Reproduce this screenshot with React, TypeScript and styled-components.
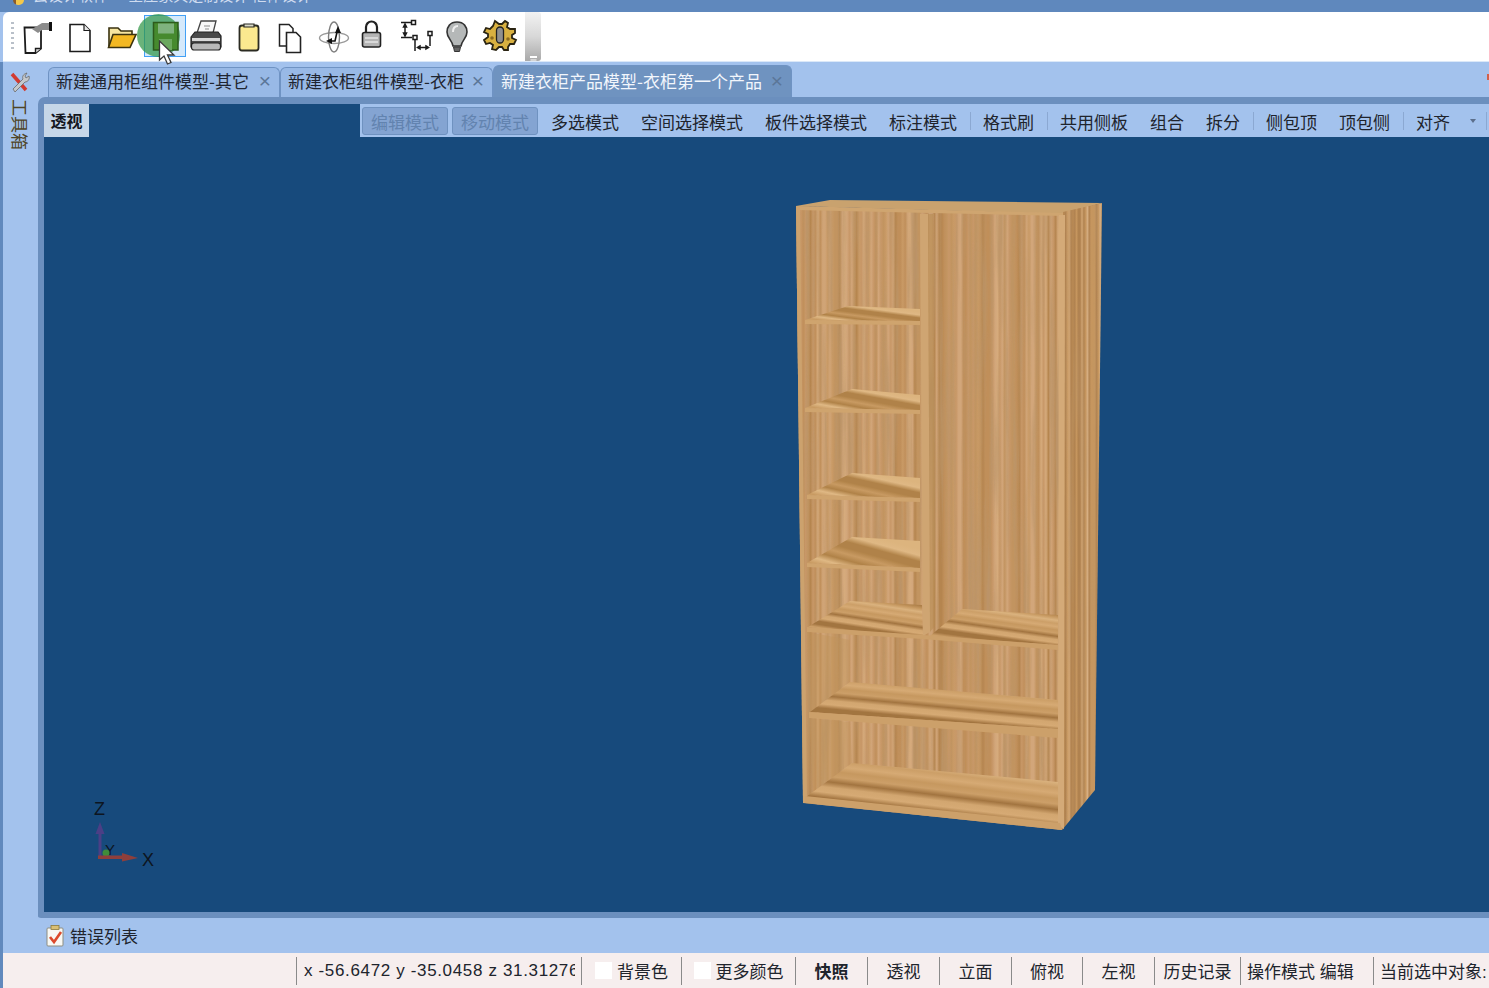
import React from 'react';
import styled, { createGlobalStyle } from 'styled-components';

const GlobalStyle = createGlobalStyle`
  html, body { margin: 0; padding: 0; background: #a3c2ed; overflow: hidden; }
  body { font-family: 'Noto Sans CJK SC', 'Liberation Sans', sans-serif; }
`;

const Frame = styled.div`
  display: flex;
  flex-direction: column;
  width: 1489px;
  height: 988px;
  overflow: hidden;
  background: #a3c2ed;
  color: #20242c;
  font-size: 17px;
`;

const TitleBar = styled.div`
  display: flex;
  flex: 0 0 12px;
  height: 12px;
  overflow: hidden;
  background: #5f88bd;
  padding-left: 13px;
`;

const AppLogo = styled.span`
  width: 11px;
  height: 5px;
  border-radius: 0 0 6px 6px;
  background: linear-gradient(90deg, #8a5a2a 0 30%, #f4c84a 30%);
`;

const TitleText = styled.span`
  margin: -15px 0 0 9px;
  line-height: 20px;
  font-size: 15px;
  white-space: pre;
  color: #cfdcf0;
`;

const Toolbar = styled.div`
  position: relative;
  display: flex;
  align-items: center;
  flex: 0 0 49px;
  margin-left: 3px;
  background: #fff;
  border-radius: 6px 0 0 0;
  border-bottom: 1px solid #dbe8f8;
`;

const Gripper = styled.div`
  width: 3px;
  height: 30px;
  margin: 0 3px 0 8px;
  background: repeating-linear-gradient(180deg, #b9c0c9 0 2px, transparent 2px 5px);
`;

const ToolButton = styled.div`
  display: flex;
  flex: 0 0 42px;
  height: 48px;
  svg { display: block; }
`;

const Overflow = styled.div`
  position: relative;
  flex: 0 0 16px;
  height: 49px;
  margin-left: 4px;
  border-radius: 0 3px 3px 0;
  background: linear-gradient(180deg, #f2f2f2, #d8d8d8 50%, #a9a9a9);
  &::after {
    content: '';
    position: absolute;
    left: 5px;
    bottom: 3px;
    width: 7px;
    height: 2px;
    background: #fff;
    box-shadow: 0 3px 0 -0.5px #fff;
  }
`;

const SaveHighlight = styled.div`
  position: absolute;
  left: 141px;
  top: 3px;
  width: 40px;
  height: 40px;
  border: 1px solid #42a0f5;
  background: #d5e9fb;
`;

const ClickHalo = styled.div`
  position: absolute;
  left: 134px;
  top: 2px;
  width: 43px;
  height: 43px;
  border-radius: 50%;
  background: rgba(48, 150, 70, 0.72);
`;

const SaveIcon = styled.div`
  position: absolute;
  left: 140px;
  top: 0;
`;

const Cursor = styled.svg`
  position: absolute;
  left: 155px;
  top: 28px;
`;

const Workspace = styled.div`
  display: flex;
  flex-direction: column;
  flex: 1;
  min-height: 0;
  border-left: 3px solid #6189bd;
`;

const TabStrip = styled.div`
  display: flex;
  align-items: flex-end;
  flex: 0 0 35px;
  padding-left: 45px;
  position: relative;
`;

const Tab = styled.div<{ $active?: boolean; $width: number }>`
  display: flex;
  align-items: center;
  justify-content: space-between;
  box-sizing: border-box;
  width: ${(p) => p.$width}px;
  height: ${(p) => (p.$active ? 32 : 30)}px;
  padding: 0 8px ${(p) => (p.$active ? 2 : 4)}px 7px;
  border: 1px solid #6f93c3;
  border-bottom: 0;
  border-radius: 6px 6px 0 0;
  background: ${(p) => (p.$active ? '#6f93c0' : '#98b9e6')};
  color: ${(p) => (p.$active ? '#f2f6fc' : '#1f2530')};
  white-space: nowrap;
`;

const TabClose = styled.span`
  font-family: 'Liberation Sans', sans-serif;
  font-size: 21px;
  line-height: 1;
  color: #5b7698;
`;

const EdgeMark = styled.span`
  position: absolute;
  right: 0;
  top: 12px;
  width: 2px;
  height: 6px;
  background: #d0604c;
`;

const Body = styled.div`
  display: flex;
  flex: 1;
  min-height: 0;
`;

const SidePanel = styled.div`
  display: flex;
  flex-direction: column;
  align-items: center;
  box-sizing: border-box;
  flex: 0 0 35px;
  margin-top: -27px;
  padding-right: 2px;
`;

const SideLabel = styled.span`
  margin-top: 5px;
  writing-mode: vertical-rl;
  text-orientation: sideways;
  line-height: 18px;
  color: #4f4526;
`;

const Main = styled.div`
  flex: 1;
  min-width: 0;
  display: flex;
  border: solid #6b8fbe;
  border-width: 7px 0 6px 6px;
  border-radius: 7px 0 0 3px;
`;

const Viewport = styled.div`
  position: relative;
  flex: 1;
  min-width: 0;
  background: #174a7c;
`;

const ViewTop = styled.div`
  position: relative;
  display: flex;
  justify-content: space-between;
  height: 33px;
`;

const ViewLabel = styled.div`
  display: flex;
  align-items: center;
  justify-content: center;
  width: 45px;
  background: #c6d7e8;
  font-weight: 700;
  font-size: 16px;
  padding-bottom: 2px;
  box-sizing: border-box;
  color: #14181f;
`;

const ModeBar = styled.div`
  display: flex;
  align-items: center;
  width: 1129px;
  padding-left: 2px;
  box-sizing: border-box;
  background: #a3c2ed;
  white-space: nowrap;
`;

const ModeButton = styled.div<{ $last?: boolean }>`
  display: flex;
  align-items: center;
  box-sizing: border-box;
  height: 28px;
  padding: 2px 8px 0;
  margin-right: ${(p) => (p.$last ? 2 : 4)}px;
  border: 1px solid #6f92c0;
  border-radius: 3px;
  background: #84a4d2;
  color: #6283af;
`;

const ModeItem = styled.div`
  padding: 2px 11px 0;
`;

const ModeSep = styled.i`
  width: 1px;
  height: 18px;
  margin: 0 1.5px;
  background: #8ba8d2;
`;

const Caret = styled.i`
  width: 0;
  height: 0;
  margin: 0 8px 0 9px;
  border: 3.5px solid transparent;
  border-top: 4px solid #5b6f8c;
  border-bottom: 0;
`;

const SceneSvg = styled.svg`
  position: absolute;
  left: 0;
  top: 0;
`;

const ErrorRow = styled.div`
  display: flex;
  align-items: center;
  gap: 5px;
  flex: 0 0 35px;
  padding-left: 42px;
`;

const StatusBar = styled.div`
  display: flex;
  align-items: center;
  flex: 0 0 35px;
  background: #f6eeee;
  white-space: nowrap;
`;

const StatusLead = styled.div`
  flex: 0 0 293px;
`;

const StatusCell = styled.div<{ $w: number; $bold?: boolean; $start?: boolean }>`
  display: flex;
  align-items: center;
  justify-content: ${(p) => (p.$start ? 'flex-start' : 'center')};
  gap: 5px;
  box-sizing: border-box;
  flex: 0 0 ${(p) => p.$w}px;
  height: 28px;
  padding-left: ${(p) => (p.$start ? 6 : 0)}px;
  border-left: 1px solid #8a8a8a;
  overflow: hidden;
  font-weight: ${(p) => (p.$bold ? 700 : 400)};
  font-family: 'Liberation Sans', 'Noto Sans CJK SC', sans-serif;
`;

const CoordText = styled.span`
  display: block;
  width: 271px;
  margin-left: 1px;
  overflow: hidden;
  letter-spacing: 0.65px;
`;

const Swatch = styled.i`
  flex: 0 0 17px;
  height: 17px;
  background: #fff;
`;

// wood grain stripes, seeded so that the picture is the same on every load
const stripes = (seed: number, count: number, colors: string[]) => {
  let s = seed;
  const next = () => {
    s = (s * 16807) % 2147483647;
    return (s % 1000) / 1000;
  };
  return Array.from({ length: count + 1 }, (_, i) => ({
    offset: `${(i / count) * 100}%`,
    color: colors[Math.floor(next() * colors.length)],
  }));
};

const VERT = ['#c99a66', '#d0a476', '#c08f5a', '#d6ab7c', '#c89868', '#b5854f', '#d2a67a', '#c29460'];
const SIDE = ['#c99a64', '#d2a674', '#b98a54', '#d8b084', '#c6965e', '#b08250'];
const FLAT = ['#d6aa74', '#c69860', '#ad7f48', '#dab27e', '#cc9f68', '#a27440', '#d2a670'];
const SLANT = ['#dcb47e', '#d6ac76', '#dfb884', '#c89a62', '#b08248', '#d4aa74'];

const Stops = ({ list }: { list: { offset: string; color: string }[] }) => (
  <>
    {list.map((stop) => (
      <stop key={stop.offset} offset={stop.offset} stopColor={stop.color} />
    ))}
  </>
);

const shelves = [
  { top: '805,320 848,306 920,309 920,321', front: '805,320 920,321 920,325 805,324' },
  { top: '805,408 852,389 920,395 920,410', front: '805,408 920,410 920,414 805,412' },
  { top: '807,495 852,473 920,478 920,498', front: '807,495 920,498 920,502 807,499' },
  { top: '807,563 852,537 920,541 920,568', front: '807,563 920,568 920,572 807,567' },
];

const floors = [
  { top: '808,627 850,601 922,605 923,636', front: '807,627 923,635 923,639 807,632' },
  { top: '930,636 962,609 1058,615 1058,645', front: '923,635 1058,645 1058,650 923,639' },
  { top: '810,712 850,682 1058,700 1058,729', front: '809,712 1058,729 1058,738 809,718' },
  { top: '806,797 852,763 1058,782 1058,824', front: '805,796 1060,823 1062,830 805,803' },
];

const Cabinet = () => (
  <g transform="translate(-44 -104)">
    <defs>
      <linearGradient id="woodBack" x1="0" x2="1" y1="0" y2="0">
        <Stops list={stripes(41, 110, VERT)} />
      </linearGradient>
      <linearGradient id="woodSide" x1="0" x2="1" y1="0" y2="0">
        <Stops list={stripes(977, 22, SIDE)} />
      </linearGradient>
      <linearGradient id="woodFlat" x1="0.7" x2="0.2" y1="-0.1" y2="0.9">
        <Stops list={stripes(313, 14, FLAT)} />
      </linearGradient>
      <linearGradient id="woodSlant" x1="0" x2="1" y1="1" y2="0">
        <Stops list={stripes(57, 10, SLANT)} />
      </linearGradient>
      <filter id="grain" x="0" y="0" width="100%" height="100%">
        <feTurbulence type="fractalNoise" baseFrequency="0.16 0.006" numOctaves="4" seed="6" />
        <feColorMatrix values="0 0 0 0 0.50  0 0 0 0 0.30  0 0 0 0 0.14  2.4 0 0 0 -1" />
        <feComposite in2="SourceAlpha" operator="in" />
      </filter>
      <filter id="soft" x="-2%" y="-2%" width="104%" height="104%">
        <feGaussianBlur stdDeviation="0.7" />
      </filter>
    </defs>

    <g filter="url(#soft)">
      <polygon points="796,206 830,200 1102,203 1063,214" fill="#c9a26e" />
      <polygon points="1063,212 1102,203 1095,790 1062,830" fill="url(#woodSide)" />
      <polygon points="1063,212 1102,203 1095,790 1062,830" filter="url(#grain)" opacity="0.5" />
      <polygon points="796,206 1063,214 1062,830 803,803" fill="url(#woodBack)" />
      <polygon points="796,206 1063,214 1062,830 803,803" filter="url(#grain)" opacity="0.9" />
      <polygon points="796,206 1063,213 1063,216 797,210" fill="#cfa570" />

      {/* uprights */}
      <polygon points="920,214 928,214 930,632 923,636" fill="#cfa572" />
      <polygon points="928,214 933,214 935,626 930,632" fill="#b78a50" opacity="0.55" />
      <polygon points="1059,215 1065,215 1064,829 1058,826" fill="#d4aa78" />
      <polygon points="796,206 800,207 807,803 803,803" fill="#cca26e" />

      {/* lower compartment side walls */}
      <polygon points="809,718 850,722 852,763 813,792" fill="#c0935a" opacity="0.4" />
      <polygon points="807,632 850,640 850,682 810,712" fill="#c0935a" opacity="0.4" />

      {shelves.map((shelf) => (
        <g key={shelf.top}>
          <polygon points={shelf.top} fill="url(#woodSlant)" />
          <polygon points={shelf.front} fill="#cfa46e" />
        </g>
      ))}
      {floors.map((floor) => (
        <g key={floor.top}>
          <polygon points={floor.top} fill="url(#woodFlat)" />
          <polygon points={floor.front} fill="#cca06a" />
        </g>
      ))}
    </g>
  </g>
);

const AxisGizmo = () => (
  <g transform="translate(-44 -104)" fontFamily="'Liberation Sans', sans-serif" fontSize="18" fill="#0d1520">
    <text x="94" y="815">Z</text>
    <text x="142" y="866">X</text>
    <path d="M100 822 L104.5 834 H101.5 V856 H98.5 V834 H95.5 Z" fill="#4b3f86" />
    <text x="105" y="855" fontSize="15">Y</text>
    <circle cx="106" cy="853" r="3.5" fill="#3f8c3a" />
    <path d="M98 855.5 H122 V853 L138 858 L122 861.5 V859 H98 Z" fill="#8e3f3c" />
  </g>
);

// toolbar icons share one box: 42 wide, 48 high, centre at 21,24
const icons: React.ReactNode[] = [
  <g key="model">
    <path d="M7.5 14.5 H24 V35.5 L18.5 40 H8.5 Z" fill="#fff" stroke="#1c1c1c" strokeWidth="1.8" />
    <path d="M18.5 40 V35.5 H24" fill="#ddd" stroke="#1c1c1c" strokeWidth="1.4" />
    <path d="M15 16 L25 10 L32 10 V17 L25 17 L21 20 Z" fill="#8c8c8c" />
    <rect x="32" y="9" width="3" height="9" fill="#111" />
  </g>,
  <g key="new">
    <path d="M11 11.5 H25 L31 17.5 V38.5 H11 Z" fill="#fff" stroke="#1c1c1c" strokeWidth="1.6" />
    <path d="M25 11.5 V17.5 H31" fill="#e6e6e6" stroke="#1c1c1c" strokeWidth="1.2" />
  </g>,
  <g key="open">
    <path d="M8 33 V15 H17 L20 18 H31 V22" fill="#f6e5a0" stroke="#3a3210" strokeWidth="1.6" />
    <path d="M7.5 34.5 L12 21.5 H35 L29 34.5 Z" fill="#f3b822" stroke="#3a3210" strokeWidth="1.6" />
  </g>,
  <g key="print">
    <path d="M12 20 L16 8 H31 L28 20 Z" fill="#f8f8f8" stroke="#444" strokeWidth="1.3" />
    <path d="M19 13 L25 13 M20 16 H24" stroke="#8b8b8b" strokeWidth="1.2" />
    <path d="M6 24 L10 19 H33 L36 23 V34 H6 Z" fill="#4a4a4a" stroke="#222" strokeWidth="1.2" />
    <rect x="7" y="25" width="28" height="3" fill="#d8d8d8" />
    <rect x="6.5" y="30" width="29" height="7" rx="2.5" fill="#b8b8b8" stroke="#222" strokeWidth="1.2" />
  </g>,
  <g key="clip" transform="translate(1 0)">
    <rect x="11.5" y="12.5" width="19" height="25" rx="2.5" fill="#fbe98f" stroke="#2b2b22" strokeWidth="1.8" />
    <path d="M16 14 V11 H26 V14 Z" fill="#d9d9c8" stroke="#2b2b22" strokeWidth="1.2" />
  </g>,
  <g key="copy">
    <path d="M10.5 11.5 H20 L24 15.5 V33 H10.5 Z" fill="#fff" stroke="#222" strokeWidth="1.5" />
    <path d="M17.5 19.5 H27 L31.5 24 V39.5 H17.5 Z" fill="#fff" stroke="#222" strokeWidth="1.6" />
  </g>,
  <g key="orbit" fill="none" transform="translate(2 0)">
    <ellipse cx="21" cy="25" rx="14.5" ry="5.5" stroke="#9a9a9a" strokeWidth="1.4" />
    <ellipse cx="21" cy="24" rx="5.5" ry="15" stroke="#7e7e7e" strokeWidth="1.4" />
    <path d="M24.5 17 L22 28 H17" stroke="#111" strokeWidth="1.6" />
    <path d="M25 13 L28 20 H22 Z" fill="#111" />
    <path d="M13 28 L19 25 V31 Z" fill="#111" />
  </g>,
  <g key="lock" transform="translate(-3 -2)">
    <path d="M16 22 V16 A5.5 5.5 0 0 1 27 16 V22" fill="none" stroke="#222" strokeWidth="2.2" />
    <rect x="12.5" y="21.5" width="18" height="14.5" rx="2" fill="#b5b5b5" stroke="#222" strokeWidth="1.6" />
    <path d="M15 27 H28 M15 31 H28" stroke="#e5e5e5" strokeWidth="1.4" />
  </g>,
  <g key="dims" fill="none" stroke="#1b1b1b" strokeWidth="1.5" transform="translate(2 0)">
    <path d="M4 9.5 H14 M4 24.5 H15 M8 12 V22 M18 27 V38 M22 34.5 H30 M33 23 V33" />
    <rect x="14.5" y="7.5" width="4" height="4" />
    <rect x="16" y="22.5" width="4" height="4" />
    <rect x="31" y="18.5" width="4" height="4" />
    <path d="M6.5 14 L8 11 L9.5 14 Z M6.5 20 L8 23 L9.5 20 Z M23 33 L20.5 34.5 L23 36 Z M29 33 L31.5 34.5 L29 36 Z" fill="#111" />
  </g>,
  <g key="bulb" transform="translate(-1 0)">
    <path d="M21 9 C14 9 11 14 11 19 C11 25 16 27 17 33 H25 C26 27 31 25 31 19 C31 14 28 9 21 9 Z" fill="#b5b8b8" stroke="#333" strokeWidth="1.6" />
    <path d="M17 19 C17 15 19 13 22 13" fill="none" stroke="#eee" strokeWidth="2" />
    <path d="M17.5 34 H24.5 L23.5 38.5 H18.5 Z" fill="#666" stroke="#333" />
  </g>,
  <g key="gear" transform="translate(0 -2)">
    <path
      d="M16 10 L20 13 H23 L26 10 L29 12 L28 16 L31 18 L36 18 L36 22 L33 24 L33 27 L37 29 L35 33 L31 33 L29 36 L29 39 L25 39 L23 36 H20 L17 39 L13 38 L14 34 L11 32 L7 33 L5 29 L9 26 V23 L5 21 L7 17 L11 18 L14 15 Z"
      fill="#d8b040"
      stroke="#2a2412"
      strokeWidth="1.8"
    />
    <circle cx="13" cy="27" r="1.8" fill="#8a6a20" />
    <circle cx="29" cy="28" r="1.8" fill="#8a6a20" />
    <rect x="17.5" y="16" width="7" height="16" rx="3.5" fill="#8f8f8f" stroke="#222" strokeWidth="1.3" />
  </g>,
];

const SaveGlyph = () => (
  <svg width="42" height="48" viewBox="0 0 42 48">
    <path d="M10.5 10.5 H35 V38 H10.5 Z" fill="#468a2e" stroke="#2c5a1c" strokeWidth="1.5" />
    <rect x="15" y="11.5" width="16" height="10" fill="#7fb27e" />
    <rect x="16" y="27" width="13" height="11" fill="#6ba85f" />
  </svg>
);

const ToolIcon = ({ children }: { children: React.ReactNode }) => (
  <ToolButton>
    <svg width="42" height="48" viewBox="0 0 42 48">
      {children}
    </svg>
  </ToolButton>
);

const tabs = [
  { label: '新建通用柜组件模型-其它', width: 232 },
  { label: '新建衣柜组件模型-衣柜', width: 213 },
  { label: '新建衣柜产品模型-衣柜第一个产品', width: 299, active: true },
];

const modeItems = [
  '多选模式', '空间选择模式', '板件选择模式', '标注模式', '|', '格式刷', '|',
  '共用侧板', '组合', '拆分', '|', '侧包顶', '顶包侧', '|', '对齐',
];

const views: [string, number, boolean?][] = [
  ['快照', 72, true],
  ['透视', 72],
  ['立面', 72],
  ['俯视', 71],
  ['左视', 72],
  ['历史记录', 86],
];

const App = () => (
  <Frame>
    <GlobalStyle />
    <TitleBar>
      <AppLogo />
      <TitleText>云设计软件 — 全屋家具定制设计 柜体设计</TitleText>
    </TitleBar>

    <Toolbar>
      <Gripper />
      {icons.slice(0, 3).map((icon, i) => (
        <ToolIcon key={i}>{icon}</ToolIcon>
      ))}
      <ToolButton />
      {icons.slice(3).map((icon, i) => (
        <ToolIcon key={i}>{icon}</ToolIcon>
      ))}
      <Overflow />
      <SaveHighlight />
      <ClickHalo />
      <SaveIcon>
        <SaveGlyph />
      </SaveIcon>
      <Cursor width="20" height="26" viewBox="0 0 20 26">
        <path d="M1.5 1 V20 L6 16 L9.5 24 L13 22.5 L9.5 15 H16 Z" fill="#fff" stroke="#3a3a3a" strokeWidth="1.3" />
      </Cursor>
    </Toolbar>

    <Workspace>
      <TabStrip>
        {tabs.map((tab) => (
          <Tab key={tab.label} $width={tab.width} $active={tab.active}>
            {tab.label}
            <TabClose>×</TabClose>
          </Tab>
        ))}
        <EdgeMark />
      </TabStrip>

      <Body>
        <SidePanel>
          <svg width="24" height="24" viewBox="0 0 24 24">
            <path d="M4 4 L18 20" stroke="#d23a30" strokeWidth="3.5" />
            <path d="M19 3 C15 4 14 7 15 9 L5 19 L7 22 L17 12 C20 12 22 9 21 6 L18 8 L17 6 Z" fill="#c4c8cc" stroke="#6a6a6a" strokeWidth="0.8" />
          </svg>
          <SideLabel>工具箱</SideLabel>
        </SidePanel>

        <Main>
          <Viewport>
            <SceneSvg width="1445" height="808" viewBox="0 0 1445 808">
              <Cabinet />
              <AxisGizmo />
            </SceneSvg>
            <ViewTop>
              <ViewLabel>透视</ViewLabel>
              <ModeBar>
                <ModeButton>编辑模式</ModeButton>
                <ModeButton $last>移动模式</ModeButton>
                {modeItems.map((item, i) =>
                  item === '|' ? <ModeSep key={i} /> : <ModeItem key={i}>{item}</ModeItem>,
                )}
                <Caret />
                <ModeSep />
              </ModeBar>
            </ViewTop>
          </Viewport>
        </Main>
      </Body>

      <ErrorRow>
        <svg width="20" height="22" viewBox="0 0 20 22">
          <rect x="2" y="3" width="16" height="18" rx="1" fill="#f8f8f4" stroke="#8d8d80" />
          <rect x="6" y="0.5" width="8" height="4" fill="#d9bf74" stroke="#8d7a3c" strokeWidth="0.8" />
          <path d="M5 12 L9 17 L16 7" fill="none" stroke="#dc4a2c" strokeWidth="2.6" />
        </svg>
        <span>错误列表</span>
      </ErrorRow>

      <StatusBar>
        <StatusLead />
        <StatusCell $w={285} $start>
          <CoordText>x -56.6472 y -35.0458 z 31.31276</CoordText>
        </StatusCell>
        <StatusCell $w={100}><Swatch />背景色</StatusCell>
        <StatusCell $w={114}><Swatch />更多颜色</StatusCell>
        {views.map(([label, width, bold]) => (
          <StatusCell key={label} $w={width} $bold={bold}>{label}</StatusCell>
        ))}
        <StatusCell $w={133} $start>操作模式 编辑</StatusCell>
        <StatusCell $w={120} $start>当前选中对象:</StatusCell>
      </StatusBar>
    </Workspace>
  </Frame>
);

export default App;
